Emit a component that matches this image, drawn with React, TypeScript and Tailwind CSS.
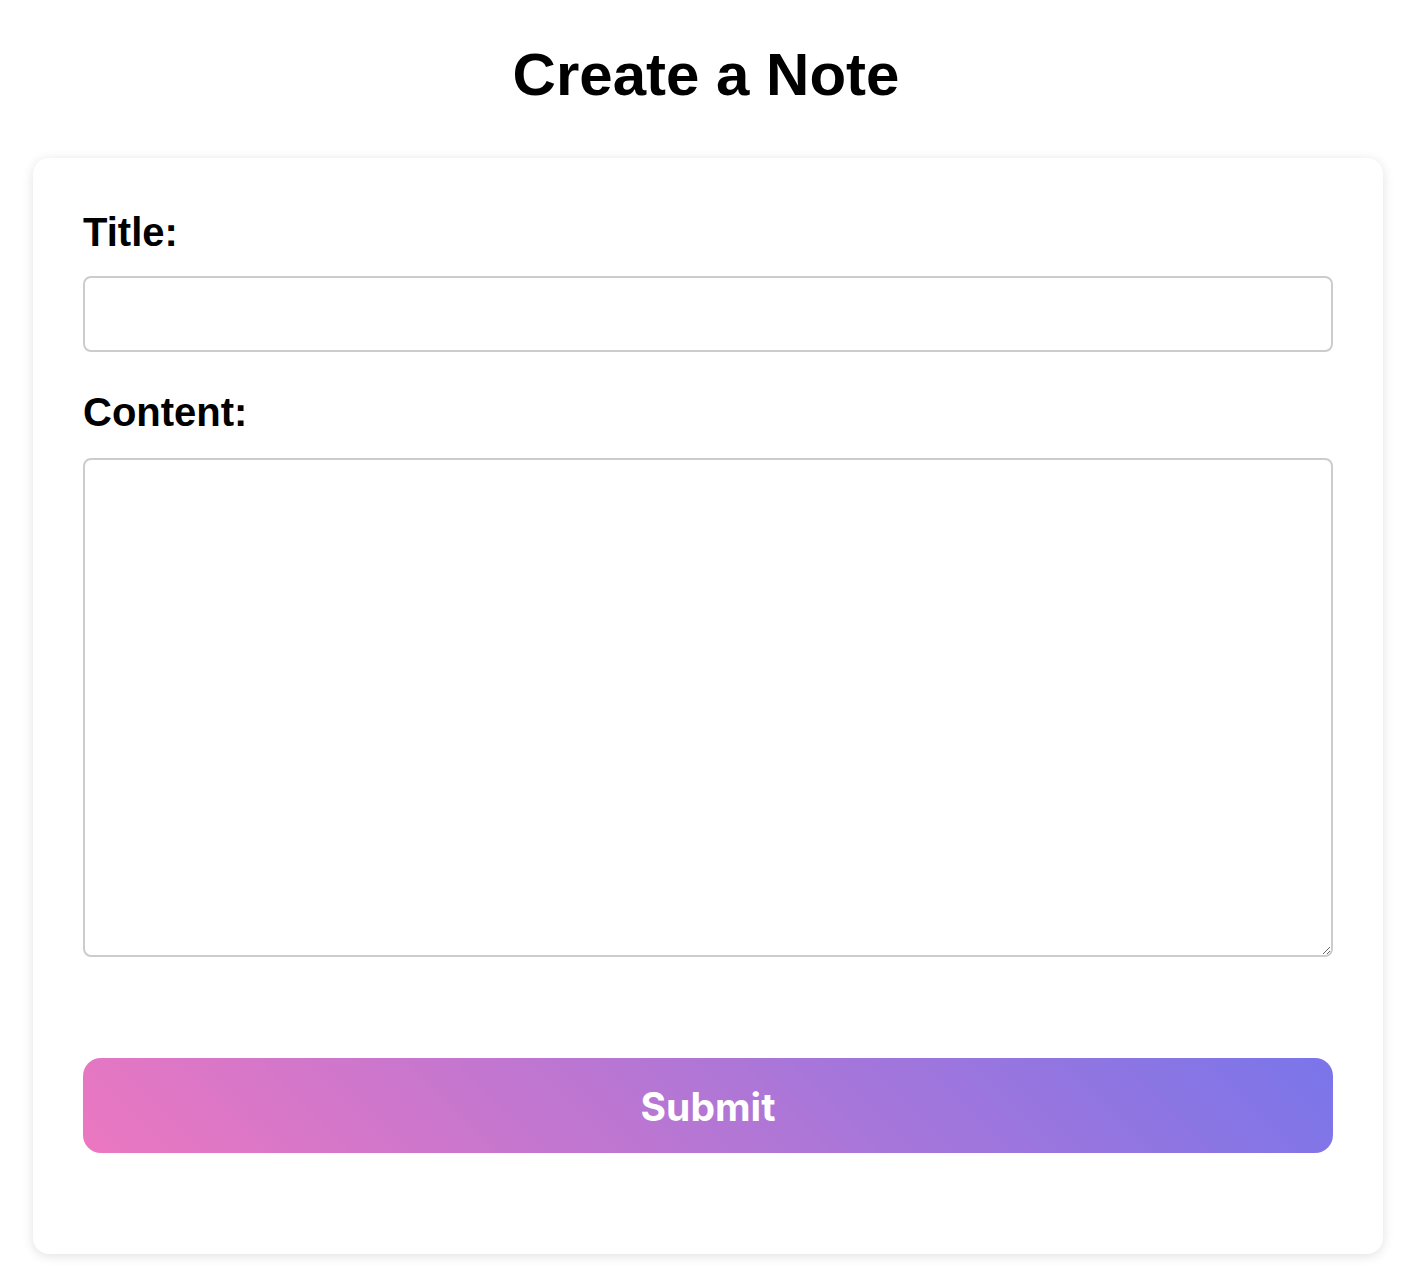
import React from 'react'

const App = () => {
  return (
    <div className="min-h-screen bg-white font-['Liberation_Sans',Arial,sans-serif] text-black pt-[40px] pb-[30px]">
      <h1 className="text-center text-[60px] leading-[69px] font-bold">Create a Note</h1>
      <form
        className="ml-[33px] mt-[49px] w-[1350px] rounded-[16px] bg-white shadow-[0_2px_12px_rgba(0,0,0,0.12)] px-[50px] pt-[51px] pb-[101px] flex flex-col"
        onSubmit={(e) => e.preventDefault()}
      >
        <label htmlFor="title" className="text-[40px] leading-[46px] font-bold">
          Title:
        </label>
        <input
          id="title"
          type="text"
          className="mt-[21px] h-[76px] w-full rounded-[8px] border-2 border-[#cccccc] px-3 text-[24px] outline-none"
        />
        <label htmlFor="content" className="mt-[37px] text-[40px] leading-[46px] font-bold">
          Content:
        </label>
        <textarea
          id="content"
          className="mt-[23px] h-[499px] w-full rounded-[8px] border-2 border-[#cccccc] p-3 text-[24px] outline-none"
        />
        <button
          type="submit"
          className="mt-[101px] h-[95px] w-full rounded-[18px] bg-[linear-gradient(45deg,#ec77c0,#7a75ea)] pt-[3px] text-white text-[39px] font-bold font-['Inter',sans-serif]"
        >
          Submit
        </button>
      </form>
    </div>
  )
}

export default App
